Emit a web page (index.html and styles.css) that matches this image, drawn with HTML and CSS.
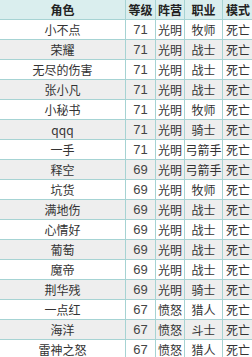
FILE: index.html
```html
<!DOCTYPE html>
<html lang="zh">
<head>
<meta charset="utf-8">
<link rel="stylesheet" href="styles.css">
</head>
<body>
<div class="wrap">
<table class="rank">
<colgroup>
<col class="c-name"><col class="c-lv"><col class="c-camp"><col class="c-job"><col class="c-mode">
</colgroup>
<thead>
<tr><th>角色</th><th>等级</th><th>阵营</th><th>职业</th><th>模式</th></tr>
</thead>
<tbody>
<tr><td>小不点</td><td>71</td><td>光明</td><td>牧师</td><td>死亡</td></tr>
<tr><td>荣耀</td><td>71</td><td>光明</td><td>战士</td><td>死亡</td></tr>
<tr><td>无尽的伤害</td><td>71</td><td>光明</td><td>战士</td><td>死亡</td></tr>
<tr><td>张小凡</td><td>71</td><td>光明</td><td>战士</td><td>死亡</td></tr>
<tr><td>小秘书</td><td>71</td><td>光明</td><td>牧师</td><td>死亡</td></tr>
<tr><td>qqq</td><td>71</td><td>光明</td><td>骑士</td><td>死亡</td></tr>
<tr><td>一手</td><td>71</td><td>光明</td><td>弓箭手</td><td>死亡</td></tr>
<tr><td>释空</td><td>69</td><td>光明</td><td>弓箭手</td><td>死亡</td></tr>
<tr><td>坑货</td><td>69</td><td>光明</td><td>牧师</td><td>死亡</td></tr>
<tr><td>满地伤</td><td>69</td><td>光明</td><td>战士</td><td>死亡</td></tr>
<tr><td>心情好</td><td>69</td><td>光明</td><td>战士</td><td>死亡</td></tr>
<tr><td>葡萄</td><td>69</td><td>光明</td><td>战士</td><td>死亡</td></tr>
<tr><td>魔帝</td><td>69</td><td>光明</td><td>战士</td><td>死亡</td></tr>
<tr><td>荆华残</td><td>69</td><td>光明</td><td>骑士</td><td>死亡</td></tr>
<tr><td>一点红</td><td>67</td><td>愤怒</td><td>猎人</td><td>死亡</td></tr>
<tr><td>海洋</td><td>67</td><td>愤怒</td><td>斗士</td><td>死亡</td></tr>
<tr><td>雷神之怒</td><td>67</td><td>愤怒</td><td>猎人</td><td>死亡</td></tr>
</tbody>
</table>
</div>
</body>
</html>
```
FILE: styles.css
```css
html, body {
  margin: 0;
  padding: 0;
  background: #ffffff;
}
.wrap {
  width: 252px;
  height: 357px;
  overflow: hidden;
}
.rank {
  border-collapse: collapse;
  table-layout: fixed;
  width: 289px;
  margin: -1px 0 0 -1px;
  font-family: "Noto Sans CJK SC", "Liberation Sans", sans-serif;
  font-size: 12px;
  color: #333333;
}
.c-name { width: 126px; }
.c-lv { width: 30px; }
.c-camp { width: 29px; }
.c-job { width: 38px; }
.c-mode { width: 66px; }
.rank th, .rank td {
  border: 1px solid #a6d3d3;
  padding: 0;
  height: 19px;
  line-height: 18px;
  text-align: center;
  white-space: nowrap;
  overflow: hidden;
}
.rank td:nth-child(5), .rank th:nth-child(5) {
  text-align: left;
  padding-left: 3px;
}
.rank th {
  background: #daeeee;
  font-weight: bold;
  color: #222;
}
.rank tbody tr:nth-child(even) td {
  background: #eeeeee;
}
.rank td:nth-child(2) {
  font-family: "Liberation Sans", sans-serif;
  font-size: 13px;
  color: #444;
}
```
